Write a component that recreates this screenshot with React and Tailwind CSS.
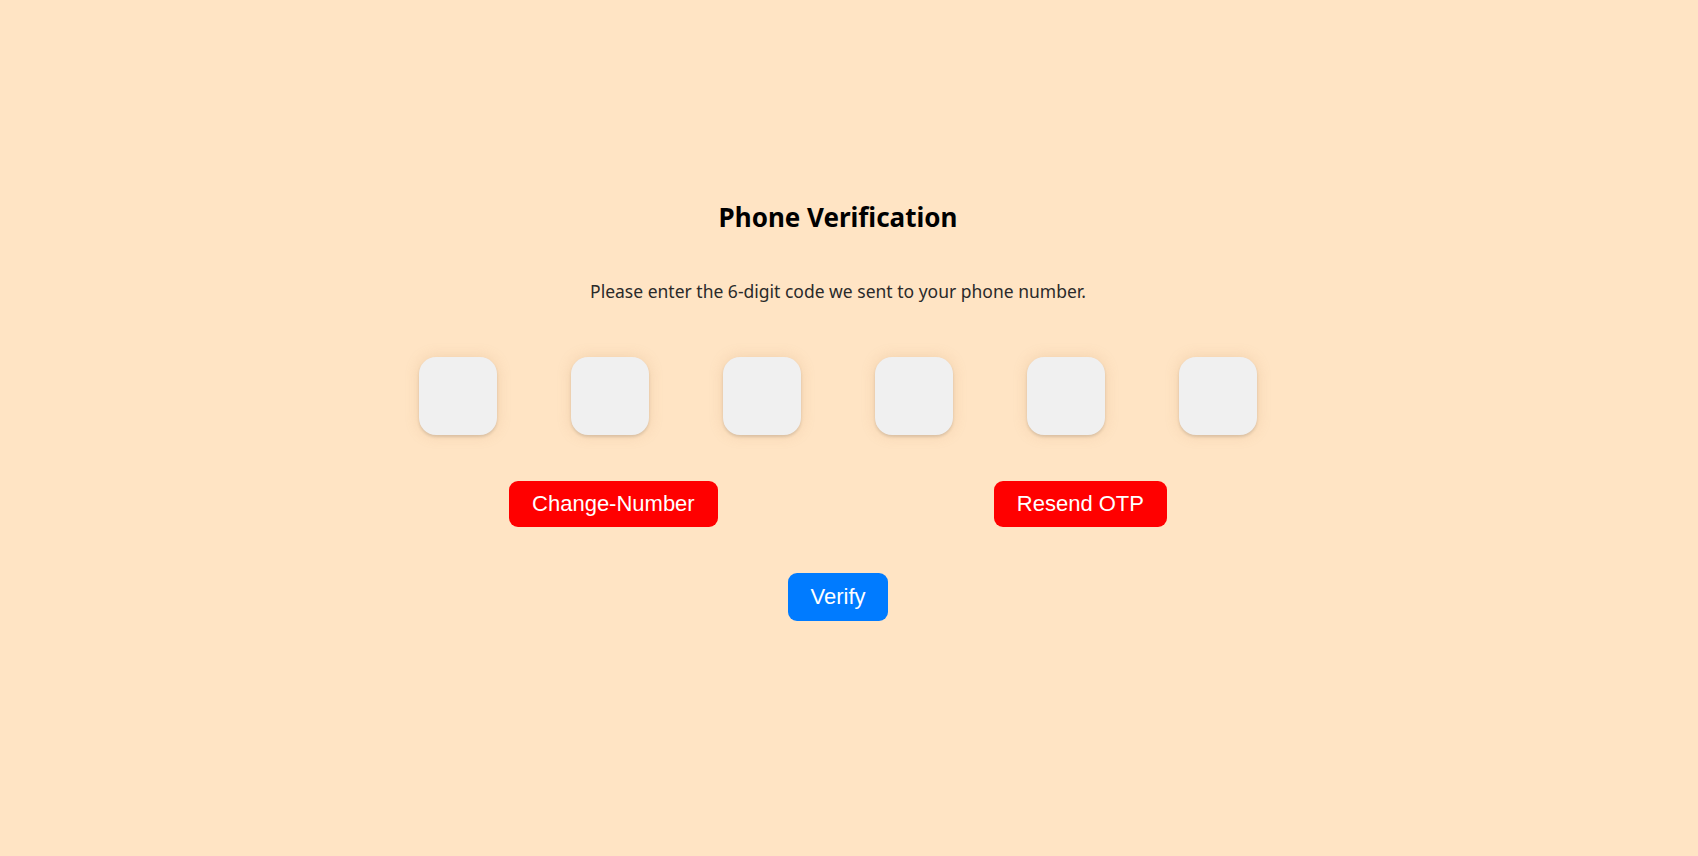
import React from "react";

export default function App() {
  const boxes = [0, 1, 2, 3, 4, 5];
  return (
    <div className="w-full h-[856px] bg-[#ffe4c4] overflow-hidden">
      <div className="flex flex-col items-center pt-[201px] pr-[22px]">
        <h1 className="font-['Noto_Sans',sans-serif] font-bold text-[26px] leading-[32px] text-black">
          Phone Verification
        </h1>
        <p className="mt-[46px] font-['Noto_Sans',sans-serif] text-[17.5px] leading-[24px] text-[#2a2a2a]">
          Please enter the 6-digit code we sent to your phone number.
        </p>
        <div className="mt-[54px] flex gap-[74px]">
          {boxes.map((i) => (
            <input
              key={i}
              type="text"
              maxLength={1}
              className="w-[78px] h-[78px] rounded-[17px] bg-[#f0f0f0] outline-none text-center shadow-[0_2px_3px_rgba(0,0,0,0.12),0_0_14px_rgba(200,150,100,0.25)]"
            />
          ))}
        </div>
        <div className="mt-[46px] w-[934px] flex justify-around">
          <button className="bg-[#ff0000] text-white font-['Liberation_Sans',Arial,sans-serif] text-[22px] leading-[26px] px-[23px] py-[10px] rounded-[9px]">
            Change-Number
          </button>
          <button className="bg-[#ff0000] text-white font-['Liberation_Sans',Arial,sans-serif] text-[22px] leading-[26px] px-[23px] py-[10px] rounded-[9px]">
            Resend OTP
          </button>
        </div>
        <button className="mt-[46px] bg-[#007bff] text-white font-['Liberation_Sans',Arial,sans-serif] text-[22px] leading-[26px] px-[22px] py-[11px] rounded-[9px]">
          Verify
        </button>
      </div>
    </div>
  );
}
